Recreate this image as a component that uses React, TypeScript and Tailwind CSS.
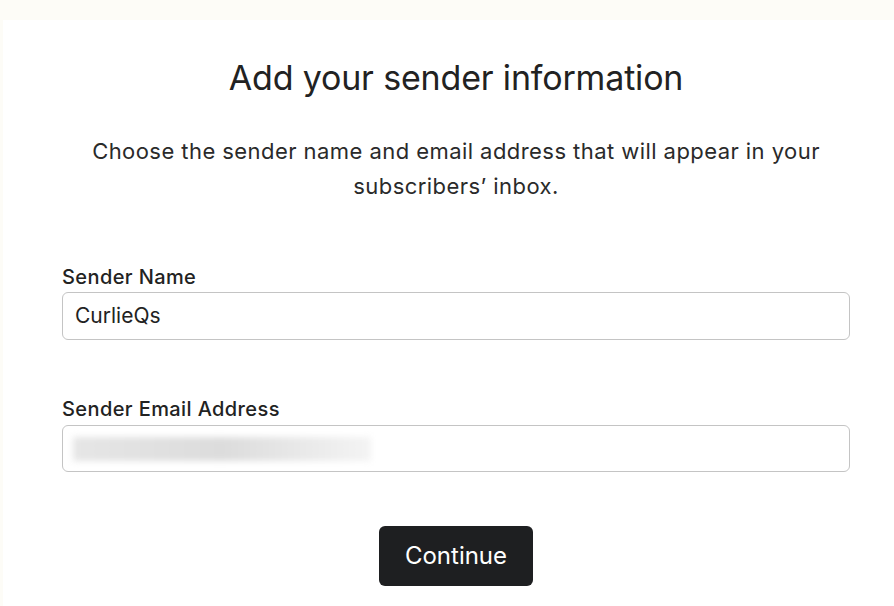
export default function App() {
  return (
    <div
      className="h-[606px] w-[894px] overflow-hidden bg-[#fdfcf7] pl-[3px] pt-[20px] text-[#222222]"
      style={{ fontFamily: "Inter, 'Noto Sans', sans-serif" }}
    >
      <div className="flex h-[620px] w-[906px] flex-col items-center bg-white px-[59px] pt-[36px]">
        <h1 className="text-[34px] leading-[44px] font-normal tracking-[-0.005em]">Add your sender information</h1>

        <p className="mt-[34px] text-center text-[22px] leading-[35px] tracking-[0.02em] text-[#2a2a2a]">
          Choose the sender name and email address that will appear in your
          <br />
          subscribers’ inbox.
        </p>

        <div className="mt-[60px] flex w-full flex-col">
          <label className="text-[20px] leading-[26px] font-medium tracking-[0.02em]">Sender Name</label>
          <div className="mt-[2px] flex h-[48px] w-full items-center rounded-[6px] border border-[#c4c4c4] px-[12px] text-[21px]">
            CurlieQs
          </div>

          <label className="mt-[56px] text-[20px] leading-[26px] font-medium tracking-[0.02em]">Sender Email Address</label>
          <div className="mt-[3px] flex h-[47px] w-full items-center rounded-[6px] border border-[#c4c4c4] px-[10px]">
            <div className="h-[24px] w-[298px] bg-gradient-to-r from-[#e6e6e6] via-[#dcdcdc] to-[#f4f4f4] blur-[3px]" />
          </div>
        </div>

        <button className="mt-[54px] h-[60px] w-[154px] rounded-[6px] bg-[#1e1f21] text-[24px] text-white">
          Continue
        </button>
      </div>
    </div>
  );
}
